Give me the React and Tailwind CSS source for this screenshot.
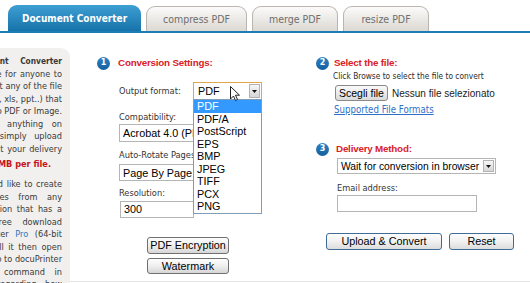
import React from 'react';

const V = "font-['DejaVu_Sans_Condensed','DejaVu_Sans',sans-serif]";
const A = "font-['Liberation_Sans',Arial,sans-serif]";

const formats = ['PDF', 'PDF/A', 'PostScript', 'EPS', 'BMP', 'JPEG', 'TIFF', 'PCX', 'PNG'];

function Tabs() {
  return (
    <div className="flex h-[33px] items-end gap-[5px] border-b-2 border-[#1b7db5] pl-[8px]">
      <div className={`${V} flex h-[26px] w-[133px] items-center justify-center rounded-t-[9px] bg-gradient-to-b from-[#3d9fd3] to-[#1573a9] pt-[1px] text-[10px] font-bold text-white`}>
        Document Converter
      </div>
      <InactiveTab label="compress PDF" width="w-[101px]" />
      <InactiveTab label="merge PDF" width="w-[86px]" />
      <InactiveTab label="resize PDF" width="w-[86px]" />
    </div>
  );
}

function InactiveTab({ label, width }) {
  return (
    <div className={`${V} ${width} flex h-[25px] items-center justify-center rounded-t-[9px] border border-b-0 border-[#bab5ae] bg-gradient-to-b from-[#fbfbfa] to-[#dcd8d2] pt-[1px] text-[10.5px] text-[#6e6e6e]`}>
      {label}
    </div>
  );
}

function Line({ children, className = '' }) {
  return (
    <div className={`flex h-[12.5px] justify-end whitespace-nowrap ${className}`}>
      <span>{children}</span>
    </div>
  );
}

function LeftPanel() {
  return (
    <div className={`${V} mt-[15px] h-[240px] w-[70px] shrink-0 overflow-hidden rounded-tr-[9px] bg-[#f1f0ee] pt-[7px] pr-[8px] text-[9.1px] leading-[12.5px] text-[#3a3a3a]`}>
      <Line className="font-bold text-[8.3px] [word-spacing:9px]">Online Document Converter</Line>
      <Line className="[word-spacing:1px]">is free for anyone to</Line>
      <Line>convert any of the file</Line>
      <Line>formats (doc, xls, ppt..) that</Line>
      <Line>you like to PDF or Image.</Line>
      <Line className="[word-spacing:6px]">No need to install anything on</Line>
      <Line className="[word-spacing:5px]">your computer, simply upload</Line>
      <Line className="[word-spacing:1px]">the file and select your delivery</Line>
      <Line className="mt-[3px] pr-[11px] font-bold text-[#c8141b]">Maximum file size is 4MB per file.</Line>
      <Line className="mt-[7.5px] [word-spacing:1px]">If you would like to create</Line>
      <Line className="[word-spacing:7px]">PDF files from any</Line>
      <Line className="[word-spacing:2px]">application that has a</Line>
      <Line className="[word-spacing:8px]">print option, feel free download</Line>
      <Line className="[word-spacing:4px]">
        docuPrinter <span className="text-[#2b78c2]">Pro</span> (64-bit
      </Line>
      <Line className="[word-spacing:2px]">support). Install it then open</Line>
      <Line>your document and go to docuPrinter</Line>
      <Line className="[word-spacing:7px]">and choose the Print command in</Line>
      <Line className="[word-spacing:6px]">the menu regarding how</Line>
    </div>
  );
}

function Step({ n, children, gap }) {
  return (
    <div className={`flex h-[12px] items-center ${gap}`}>
      <span className="flex h-[13px] w-[13px] items-center justify-center rounded-full bg-gradient-to-b from-[#2f83c4] to-[#135f9e] font-['DejaVu_Sans',sans-serif] text-[8px] font-bold leading-none text-white">
        {n}
      </span>
      <span className={`${A} text-[9.8px] font-bold leading-none tracking-[-0.2px] text-[#da2128]`}>{children}</span>
    </div>
  );
}

function DropArrow({ className = '' }) {
  return (
    <span className={`flex w-[11px] shrink-0 items-center justify-center border border-[#b3b3b3] bg-gradient-to-b from-[#f7f7f7] to-[#d6d6d6] ${className}`}>
      <svg width="5" height="3" viewBox="0 0 5 3">
        <path d="M0 0h5L2.5 3z" fill="#111" />
      </svg>
    </span>
  );
}

function Cursor() {
  return (
    <svg className="absolute left-[37px] top-[4px] z-20" width="10" height="16" viewBox="0 0 10 16">
      <path d="M0.5 0.5v12.5l3-3 2 4.5 2-1-2-4.3h4z" fill="#fff" stroke="#222" strokeWidth="1" strokeLinejoin="round" />
    </svg>
  );
}

const grayBtn = `${A} rounded-[3px] border border-[#707070] bg-gradient-to-b from-[#fdfdfd] via-[#efefef] to-[#d6d6d6] text-[10.8px] leading-none whitespace-nowrap text-black`;
const blueBtn = `${A} h-[17px] rounded-[3px] border border-[#3f6d97] bg-gradient-to-b from-[#fdfdfd] via-[#f1f1f1] to-[#dcdcdc] text-[10.8px] leading-none whitespace-nowrap text-black`;

function Settings() {
  return (
    <div className="w-[246px] shrink-0 pl-[27px] pt-[24px] text-[#333]">
      <Step n="1" gap="gap-[8px]">Conversion Settings:</Step>

      <div className="mt-[13px] flex h-[18px] items-center">
        <span className={`${V} ml-[22px] w-[74px] text-[9.2px]`}>Output format:</span>
        <div className="relative h-[18px] w-[69px]">
          <div className={`${A} flex h-[18px] items-stretch border border-[#e2a64a] bg-white p-[1px] text-[10.8px] text-black`}>
            <span className="flex-1 pl-[3px] leading-[14px]">PDF</span>
            <DropArrow />
          </div>
          <Cursor />
          <div className={`${A} absolute left-0 top-[17px] z-10 w-[69px] border border-[#7f9db9] bg-white text-[10.8px] leading-[12.5px] text-black`}>
            {formats.map((f, i) => (
              <div key={f} className={`h-[12.5px] pl-[3px] ${i === 0 ? 'bg-[#3399ff] text-white' : ''}`}>
                {f}
              </div>
            ))}
          </div>
        </div>
      </div>

      <div className={`${V} ml-[22px] mt-[11px] h-[12px] text-[9.2px] leading-[12px]`}>Compatibility:</div>
      <Select className="mt-[1px] h-[18px]" text="Acrobat 4.0 (PDF 1.3)" />

      <div className={`${V} ml-[22px] mt-[7px] h-[12px] text-[9.2px] leading-[12px]`}>Auto-Rotate Pages:</div>
      <Select className="mt-[3px] h-[17px]" text="Page By Page" />

      <div className={`${V} ml-[22px] mt-[6px] h-[12px] text-[9.2px] leading-[12px]`}>Resolution:</div>
      <div className={`${A} ml-[23px] mt-[2px] h-[17px] w-[74px] border border-[#b5b5b5] pl-[3px] text-[10.8px] leading-[15px] text-black`}>300</div>

      <div className="ml-[50px] mt-[19px] flex w-[82px] flex-col gap-[4px]">
        <button className={`${grayBtn} h-[17px]`}>PDF Encryption</button>
        <button className={`${grayBtn} h-[16px]`}>Watermark</button>
      </div>
    </div>
  );
}

function Select({ className, text }) {
  return (
    <div className={`${A} ml-[22px] flex w-[120px] items-stretch border border-[#b5b5b5] bg-white p-[1px] text-[10.8px] text-black ${className}`}>
      <span className="flex-1 overflow-hidden whitespace-nowrap pl-[2px] leading-[14px]">{text}</span>
      <DropArrow />
    </div>
  );
}

function FilePanel() {
  return (
    <div className="flex-1 pt-[24px] text-[#333]">
      <Step n="2" gap="gap-[5px]">Select the file:</Step>
      <div className={`${V} ml-[17px] mt-[1px] h-[12px] text-[8.3px] leading-[12px] text-[#2b2b2b]`}>
        Click Browse to select the file to convert
      </div>
      <div className="ml-[19px] mt-[3px] flex h-[16px] items-center gap-[4px]">
        <button className={`${A} h-[16px] w-[53px] whitespace-nowrap rounded-[3px] border border-[#8a8a8a] bg-gradient-to-b from-[#fafafa] to-[#dadada] text-[10.5px] leading-none text-black`}>
          Scegli file
        </button>
        <span className={`${A} whitespace-nowrap text-[10px] text-[#222]`}>Nessun file selezionato</span>
      </div>
      <div className={`${V} ml-[18px] mt-[3px] h-[12px] text-[9.6px] leading-[12px] text-[#2f6fc7] underline`}>
        Supported File Formats
      </div>

      <div className="mt-[27px]">
        <Step n="3" gap="gap-[7px]">Delivery Method:</Step>
      </div>
      <div className={`${A} ml-[21px] mt-[3px] flex h-[16px] w-[159px] items-stretch border border-[#b5b5b5] bg-white p-[1px] text-[10.3px] text-black`}>
        <span className="flex-1 whitespace-nowrap pl-[2px] leading-[13px]">Wait for conversion in browser</span>
        <DropArrow />
      </div>
      <div className={`${V} ml-[21px] mt-[8px] h-[12px] text-[9.2px] leading-[12px]`}>Email address:</div>
      <div className="ml-[21px] mt-[1px] h-[17px] w-[140px] border border-[#b5b5b5] bg-white" />

      <div className="ml-[10px] mt-[21px] flex gap-[7px]">
        <button className={`${blueBtn} w-[116px]`}>Upload &amp; Convert</button>
        <button className={`${blueBtn} w-[65px]`}>Reset</button>
      </div>
    </div>
  );
}

export default function App() {
  return (
    <div className="h-[283px] w-[530px] overflow-hidden bg-white">
      <Tabs />
      <div className="flex">
        <LeftPanel />
        <div className="flex h-[249px] flex-1 border-b border-[#e4e4e4]">
          <Settings />
          <FilePanel />
        </div>
      </div>
    </div>
  );
}
